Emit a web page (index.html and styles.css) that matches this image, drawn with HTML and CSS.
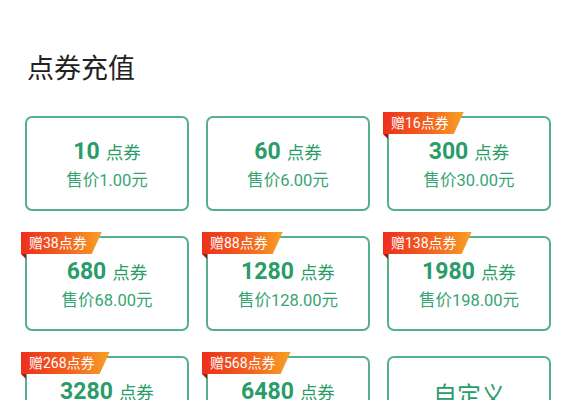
FILE: index.html
```html
<!DOCTYPE html>
<html lang="zh">
<head>
<meta charset="utf-8">
<link rel="stylesheet" href="styles.css">
</head>
<body>
<div class="page">
  <h1 class="title">点券充值</h1>
  <div class="grid">
    <div class="card"><div class="amt"><span class="num">10</span> <span class="unit">点券</span></div><div class="price">售价1.00元</div></div>
    <div class="card"><div class="amt"><span class="num">60</span> <span class="unit">点券</span></div><div class="price">售价6.00元</div></div>
    <div class="card has-badge"><span class="badge">赠16点券</span><div class="amt"><span class="num">300</span> <span class="unit">点券</span></div><div class="price">售价30.00元</div></div>
    <div class="card has-badge"><span class="badge">赠38点券</span><div class="amt"><span class="num">680</span> <span class="unit">点券</span></div><div class="price">售价68.00元</div></div>
    <div class="card has-badge"><span class="badge">赠88点券</span><div class="amt"><span class="num">1280</span> <span class="unit">点券</span></div><div class="price">售价128.00元</div></div>
    <div class="card has-badge"><span class="badge">赠138点券</span><div class="amt"><span class="num">1980</span> <span class="unit">点券</span></div><div class="price">售价198.00元</div></div>
    <div class="card has-badge"><span class="badge">赠268点券</span><div class="amt"><span class="num">3280</span> <span class="unit">点券</span></div><div class="price">售价328.00元</div></div>
    <div class="card has-badge"><span class="badge">赠568点券</span><div class="amt"><span class="num">6480</span> <span class="unit">点券</span></div><div class="price">售价648.00元</div></div>
    <div class="card custom"><div class="custom-text">自定义</div></div>
  </div>
</div>
</body>
</html>
```
FILE: styles.css
```css
html, body {
  margin: 0;
  padding: 0;
  background: #ffffff;
}
body {
  font-family: Roboto, "Noto Sans CJK SC", sans-serif;
  overflow: hidden;
  height: 400px;
}
.page {
  padding: 53px 0 0 25px;
}
.title {
  margin: 0 0 0 2px;
  font-size: 27px;
  line-height: 32px;
  font-weight: 400;
  color: #222222;
}
.grid {
  margin-top: 31px;
  display: grid;
  grid-template-columns: repeat(3, 164px);
  grid-auto-rows: 95px;
  column-gap: 17px;
  row-gap: 25px;
}
.card {
  position: relative;
  box-sizing: border-box;
  border: 2px solid #56b08c;
  border-radius: 7px;
  display: flex;
  flex-direction: column;
  align-items: center;
  justify-content: center;
  padding-top: 4px;
}
.amt {
  color: #2a9c69;
  line-height: 26px;
  white-space: nowrap;
}
.num {
  font-size: 23px;
  font-weight: 700;
}
.unit {
  font-size: 17.5px;
  margin-left: 2px;
}
.price {
  margin-top: 3px;
  font-size: 16.5px;
  line-height: 22px;
  color: #37a474;
  white-space: nowrap;
}
.badge {
  position: absolute;
  top: -6px;
  left: -6px;
  height: 22px;
  line-height: 22px;
  padding: 0 15px 0 8px;
  font-size: 14px;
  color: #ffffff;
  background: linear-gradient(90deg, #ee2f1c 0%, #f3621f 55%, #f8a126 100%);
  clip-path: polygon(0 0, 100% 0, calc(100% - 10px) 100%, 0 100%);
  white-space: nowrap;
}
.has-badge::before {
  content: "";
  position: absolute;
  top: 16px;
  left: -6px;
  width: 0;
  height: 0;
  border-top: 5px solid #a8180c;
  border-left: 5px solid transparent;
}
.custom {
  padding-top: 0;
  padding-bottom: 20px;
}
.custom-text {
  font-size: 24px;
  color: #2a9c69;
}
```
